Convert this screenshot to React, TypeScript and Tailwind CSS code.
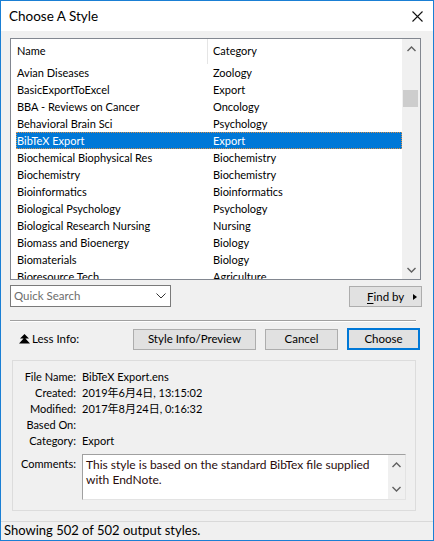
const rows: [string, string][] = [
  ["Avian Diseases", "Zoology"],
  ["BasicExportToExcel", "Export"],
  ["BBA - Reviews on Cancer", "Oncology"],
  ["Behavioral Brain Sci", "Psychology"],
  ["BibTeX Export", "Export"],
  ["Biochemical Biophysical Res", "Biochemistry"],
  ["Biochemistry", "Biochemistry"],
  ["Bioinformatics", "Bioinformatics"],
  ["Biological Psychology", "Psychology"],
  ["Biological Research Nursing", "Nursing"],
  ["Biomass and Bioenergy", "Biology"],
  ["Biomaterials", "Biology"],
  ["Bioresource Tech", "Agriculture"],
];

function ChevronUp() {
  return (
    <svg width="9" height="6" viewBox="0 0 9 6">
      <path d="M0.5 5 L4.5 1 L8.5 5" fill="none" stroke="#606060" strokeWidth="1.4" />
    </svg>
  );
}
function ChevronDown() {
  return (
    <svg width="9" height="6" viewBox="0 0 9 6">
      <path d="M0.5 1 L4.5 5 L8.5 1" fill="none" stroke="#606060" strokeWidth="1.4" />
    </svg>
  );
}

export default function App() {
  return (
    <div className="w-[434px] h-[541px] border border-[#1a7fd4] bg-[#f0f0f0] flex flex-col text-[11px] text-black font-['Lato','Noto_Sans_CJK_SC',sans-serif] overflow-hidden">
      {/* Title bar */}
      <div className="h-[30px] bg-white flex items-center justify-between shrink-0">
        <span className="ml-[8px] text-[13.5px] leading-none mt-[1px]">Choose A Style</span>
        <svg width="11" height="11" viewBox="0 0 11 11" className="mr-[10px] mt-[1px]">
          <path d="M0.5 0.5 L10.5 10.5 M10.5 0.5 L0.5 10.5" stroke="#111" strokeWidth="1.1" />
        </svg>
      </div>

      {/* Body */}
      <div className="flex-1 flex flex-col pl-[9px]">
        {/* List */}
        <div className="mt-[7px] w-[411px] h-[242px] border border-[#828790] bg-white flex">
          <div className="w-[391px] flex flex-col overflow-hidden">
            <div className="h-[25px] flex items-center shrink-0">
              <div className="w-[196px] pl-[6px]">Name</div>
              <div className="w-px h-full bg-[#e5e5e5]" />
              <div className="pl-[5px]">Category</div>
            </div>
            <div className="flex flex-col">
              {rows.map(([n, c], i) => {
                const sel = i === 4;
                return (
                  <div
                    key={n}
                    className={
                      "ml-[5px] h-[17px] shrink-0 flex items-center leading-[17px] whitespace-nowrap " +
                      (sel ? "bg-[#0078d7] text-white outline outline-1 outline-dotted outline-[#d8904a] -outline-offset-1" : "")
                    }
                  >
                    <div className="w-[197px] pl-[1px]">{n}</div>
                    <div>{c}</div>
                  </div>
                );
              })}
            </div>
          </div>
          <div className="w-[18px] bg-[#f0f0f0] flex flex-col items-center">
            <div className="h-[17px] flex items-center justify-center mt-[1px]">
              <ChevronUp />
            </div>
            <div className="flex-1 w-full flex flex-col">
              <div className="mt-[33px] ml-[1px] w-[15px] h-[17px] bg-[#cdcdcd]" />
            </div>
            <div className="h-[17px] flex items-center justify-center mb-[1px]">
              <ChevronDown />
            </div>
          </div>
        </div>

        {/* Quick search row */}
        <div className="mt-[5px] flex items-start">
          <div className="w-[161px] h-[22px] border border-[#7a7a7a] bg-white flex items-center justify-between">
            <span className="pl-[3px] text-[#6d6d6d] text-[11.5px]">Quick Search</span>
            <svg width="10" height="6" viewBox="0 0 10 6" className="mr-[4px]">
              <path d="M0.5 0.5 L5 5 L9.5 0.5" fill="none" stroke="#333" strokeWidth="1" />
            </svg>
          </div>
          <div className="ml-[178px] mt-[1px] w-[73px] h-[21px] border border-[#adadad] bg-[#e1e1e1] flex items-center whitespace-nowrap">
            <span className="ml-[17px] text-[11.5px]">
              <span className="underline underline-offset-2">F</span>ind by
            </span>
            <svg width="4" height="6" viewBox="0 0 4 6" className="ml-[9px]">
              <path d="M0 0 L4 3 L0 6 Z" fill="#000" />
            </svg>
          </div>
        </div>

        {/* Separator */}
        <div className="mt-[13px] w-[406px] h-px bg-[#a0a0a0]" />
        <div className="w-[406px] h-px bg-white" />

        {/* Buttons row */}
        <div className="mt-[6px] flex items-center h-[22px] whitespace-nowrap">
          <div className="ml-[9px] w-[114px] flex items-center">
            <svg width="11" height="10" viewBox="0 0 11 10">
              <path d="M5.5 0 L10 4.5 L1 4.5 Z M5.5 3.5 L11 9.5 L0 9.5 Z" fill="#000" />
            </svg>
            <span className="ml-[2px] text-[11.5px]">Less Info:</span>
          </div>
          <div className="w-[123px] h-[21px] border border-[#adadad] bg-[#e1e1e1] flex items-center justify-center text-[11.5px]">
            Style Info/Preview
          </div>
          <div className="ml-[9px] w-[73px] h-[21px] border border-[#adadad] bg-[#e1e1e1] flex items-center justify-center text-[11.5px]">
            Cancel
          </div>
          <div className="ml-[9px] w-[73px] h-[22px] border-2 border-[#0078d7] bg-[#e1e1e1] flex items-center justify-center text-[11.5px]">
            Choose
          </div>
        </div>

        {/* Info group */}
        <div className="mt-[10px] ml-[2px] w-[404px] h-[151px] border border-[#dcdcdc] flex flex-col pt-[8px]">
          {[
            ["File Name:", "BibTeX Export.ens"],
            ["Created:", "2019年6月4日, 13:15:02"],
            ["Modified:", "2017年8月24日, 0:16:32"],
            ["Based On:", ""],
            ["Category:", "Export"],
          ].map(([l, v]) => (
            <div key={l} className="flex h-[16px] items-center leading-[16px] text-[11px]">
              <div className="w-[63px] text-right">{l}</div>
              <div className="ml-[6px] whitespace-nowrap">{v}</div>
            </div>
          ))}
          <div className="flex mt-[5px]">
            <div className="w-[63px] text-right pt-[2px] leading-[16px] text-[11px]">Comments:</div>
            <div className="ml-[6px] w-[324px] h-[46px] bg-white border border-t-[#a0a0a0] border-l-[#a0a0a0] border-r-[#e3e3e3] border-b-[#e3e3e3] flex">
              <div className="flex-1 pl-[3px] pt-[2px] text-[12px] leading-[15px] text-[#2a0c0c]">
                This style is based on the standard BibTex file supplied with EndNote.
              </div>
              <div className="w-[17px] bg-[#f0f0f0] flex flex-col items-center justify-between py-[7px]">
                <ChevronUp />
                <ChevronDown />
              </div>
            </div>
          </div>
        </div>
      </div>

      {/* Status bar */}
      <div className="h-px bg-[#d9d9d9] shrink-0" />
      <div className="h-[18px] flex items-center pl-[3px] text-[13px] shrink-0">Showing 502 of 502 output styles.</div>
    </div>
  );
}
